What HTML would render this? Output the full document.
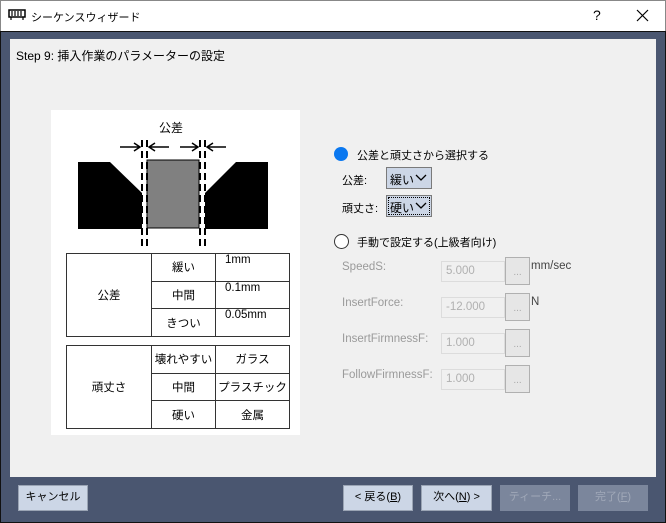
<!DOCTYPE html>
<html><head><meta charset="utf-8"><style>
*{margin:0;padding:0;box-sizing:border-box}
body{width:666px;height:523px;position:relative;overflow:hidden;background:#4a5670;font-family:"Liberation Sans","Noto Sans CJK JP",sans-serif;font-size:11px;color:#000}
.a{position:absolute}
.t{white-space:nowrap}
.btn{position:absolute;background:#ccd6e6;border:1px solid #9aa4b4;text-align:center;line-height:23px;font-size:11px}
.dis{background:#7b869c;border-color:#7b869c;color:#a0a8b8}
.lbl{color:#9a9a9a;font-size:11.5px}
.tb{position:absolute;border:1px solid #dcdcdc;background:#f0f0f0;color:#b0b0b0;font-size:11.5px;padding-left:4px;line-height:19px}
.db{position:absolute;border:1px solid #b0b0b0;background:#e6e6e6;color:#aaa;text-align:center;font-size:10px;line-height:34px}
table{border-collapse:collapse;position:absolute;background:#fff}
td{border:1px solid #333;font-size:11.5px;text-align:center;padding:0}
</style></head><body>
<div class="a" style="left:0;top:0;width:666px;height:31px;background:#fff;border:1px solid #888;border-bottom:none"></div>
<svg class="a" style="left:8px;top:9px" width="18" height="12"><rect x="1" y="1" width="16" height="7" fill="none" stroke="#000" stroke-width="1.5"/><path d="M4 2v5M7 2v5M10 2v5M13 2v5M3 8v3M15 8v3" stroke="#000" stroke-width="1.2"/></svg>
<div class="a t" style="left:31px;top:9px;font-size:11px">シーケンスウィザード</div>
<div class="a t" style="left:593px;top:7px;font-size:14px">?</div>
<svg class="a" style="left:636px;top:9px" width="13" height="13"><path d="M1 1L12 12M12 1L1 12" stroke="#000" stroke-width="1.2"/></svg>
<div class="a" style="left:0;top:31px;width:666px;height:492px;border:1px solid #111"></div>
<div class="a" style="left:10px;top:39px;width:646px;height:438px;background:#f0f0f0"></div>
<div class="a t" style="left:16px;top:47px;font-size:12px">Step 9: 挿入作業のパラメーターの設定</div>
<div class="a" style="left:51px;top:110px;width:249px;height:325px;background:#fff"></div>
<div class="a t" style="left:159px;top:119px;font-size:12px">公差</div>
<svg class="a" style="left:51px;top:110px" width="249" height="140">
<path d="M27 52H59L91 83V119H27Z" fill="#000"/>
<path d="M217 52H185L154 83V119H217Z" fill="#000"/>
<rect x="96" y="50" width="52" height="68" fill="#808080" stroke="#000" stroke-width="1"/>
<g stroke="#000" stroke-width="2" stroke-dasharray="7,4"><path d="M91 30V140M96 30V140M149 30V140M154 30V140"/></g>
<g stroke="#000" stroke-width="1.5" fill="none"><path d="M69 37H89M83 33L89 37L83 41M98 37H118M104 33L98 37L104 41M129 37H147M141 33L147 37L141 41M156 37H175M162 33L156 37L162 41"/></g>
</svg>
<table style="left:66px;top:253px;width:224px;height:84px">
<tr><td rowspan="3" style="width:85px">公差</td><td style="width:64px">緩い</td><td style="text-align:left;padding-left:9px;vertical-align:top">1mm</td></tr>
<tr><td>中間</td><td style="text-align:left;padding-left:9px;vertical-align:top">0.1mm</td></tr>
<tr><td>きつい</td><td style="text-align:left;padding-left:9px;vertical-align:top">0.05mm</td></tr>
</table>
<table style="left:66px;top:345px;width:224px;height:84px">
<tr><td rowspan="3" style="width:85px">頑丈さ</td><td style="width:64px">壊れやすい</td><td>ガラス</td></tr>
<tr><td>中間</td><td>プラスチック</td></tr>
<tr><td>硬い</td><td>金属</td></tr>
</table>
<div class="a" style="left:334px;top:147px;width:14px;height:14px;border-radius:50%;background:#0a78f0"></div>
<div class="a t" style="left:357px;top:147px">公差と頑丈さから選択する</div>
<div class="a t" style="left:342px;top:172px">公差:</div>
<div class="a" style="left:386px;top:167px;width:46px;height:22px;background:#ccd6e6;border:1px solid #7a7a7a"></div>
<div class="a t" style="left:390px;top:171px;font-size:12px">緩い</div>
<svg class="a" style="left:415px;top:174px" width="12" height="8"><path d="M1 1L6 6L11 1" stroke="#000" stroke-width="1.3" fill="none"/></svg>
<div class="a t" style="left:342px;top:200px">頑丈さ:</div>
<div class="a" style="left:386px;top:195px;width:46px;height:22px;background:#ccd6e6;border:1px solid #7a7a7a"></div>
<div class="a" style="left:388px;top:197px;width:42px;height:18px;border:1px dotted #000"></div>
<div class="a t" style="left:390px;top:199px;font-size:12px">硬い</div>
<svg class="a" style="left:415px;top:202px" width="12" height="8"><path d="M1 1L6 6L11 1" stroke="#000" stroke-width="1.3" fill="none"/></svg>
<div class="a" style="left:334px;top:234px;width:15px;height:15px;border-radius:50%;background:#fff;border:1px solid #333"></div>
<div class="a t" style="left:357px;top:234px">手動で設定する(上級者向け)</div>
<div class="a t lbl" style="left:342px;top:261px">SpeedS:</div>
<div class="tb" style="left:441px;top:261px;width:64px;height:21px">5.000</div>
<div class="db" style="left:505px;top:257px;width:25px;height:28px;line-height:30px">...</div>
<div class="a t" style="left:531px;top:260px;color:#444;font-size:11.5px">mm/sec</div>
<div class="a t lbl" style="left:342px;top:297px">InsertForce:</div>
<div class="tb" style="left:441px;top:297px;width:64px;height:21px">-12.000</div>
<div class="db" style="left:505px;top:293px;width:25px;height:28px;line-height:30px">...</div>
<div class="a t" style="left:531px;top:296px;color:#444;font-size:11.5px">N</div>
<div class="a t lbl" style="left:342px;top:333px">InsertFirmnessF:</div>
<div class="tb" style="left:441px;top:333px;width:64px;height:21px">1.000</div>
<div class="db" style="left:505px;top:329px;width:25px;height:28px;line-height:30px">...</div>
<div class="a t lbl" style="left:342px;top:369px">FollowFirmnessF:</div>
<div class="tb" style="left:441px;top:369px;width:64px;height:21px">1.000</div>
<div class="db" style="left:505px;top:365px;width:25px;height:28px;line-height:30px">...</div>
<div class="btn" style="left:18px;top:485px;width:70px;height:26px">キャンセル</div>
<div class="btn" style="left:343px;top:485px;width:70px;height:26px">&lt; 戻る(<u>B</u>)</div>
<div class="btn" style="left:421px;top:485px;width:71px;height:26px">次へ(<u>N</u>) &gt;</div>
<div class="btn dis" style="left:500px;top:485px;width:70px;height:26px">ティーチ...</div>
<div class="btn dis" style="left:578px;top:485px;width:70px;height:26px">完了(<u>F</u>)</div>
</body></html>
